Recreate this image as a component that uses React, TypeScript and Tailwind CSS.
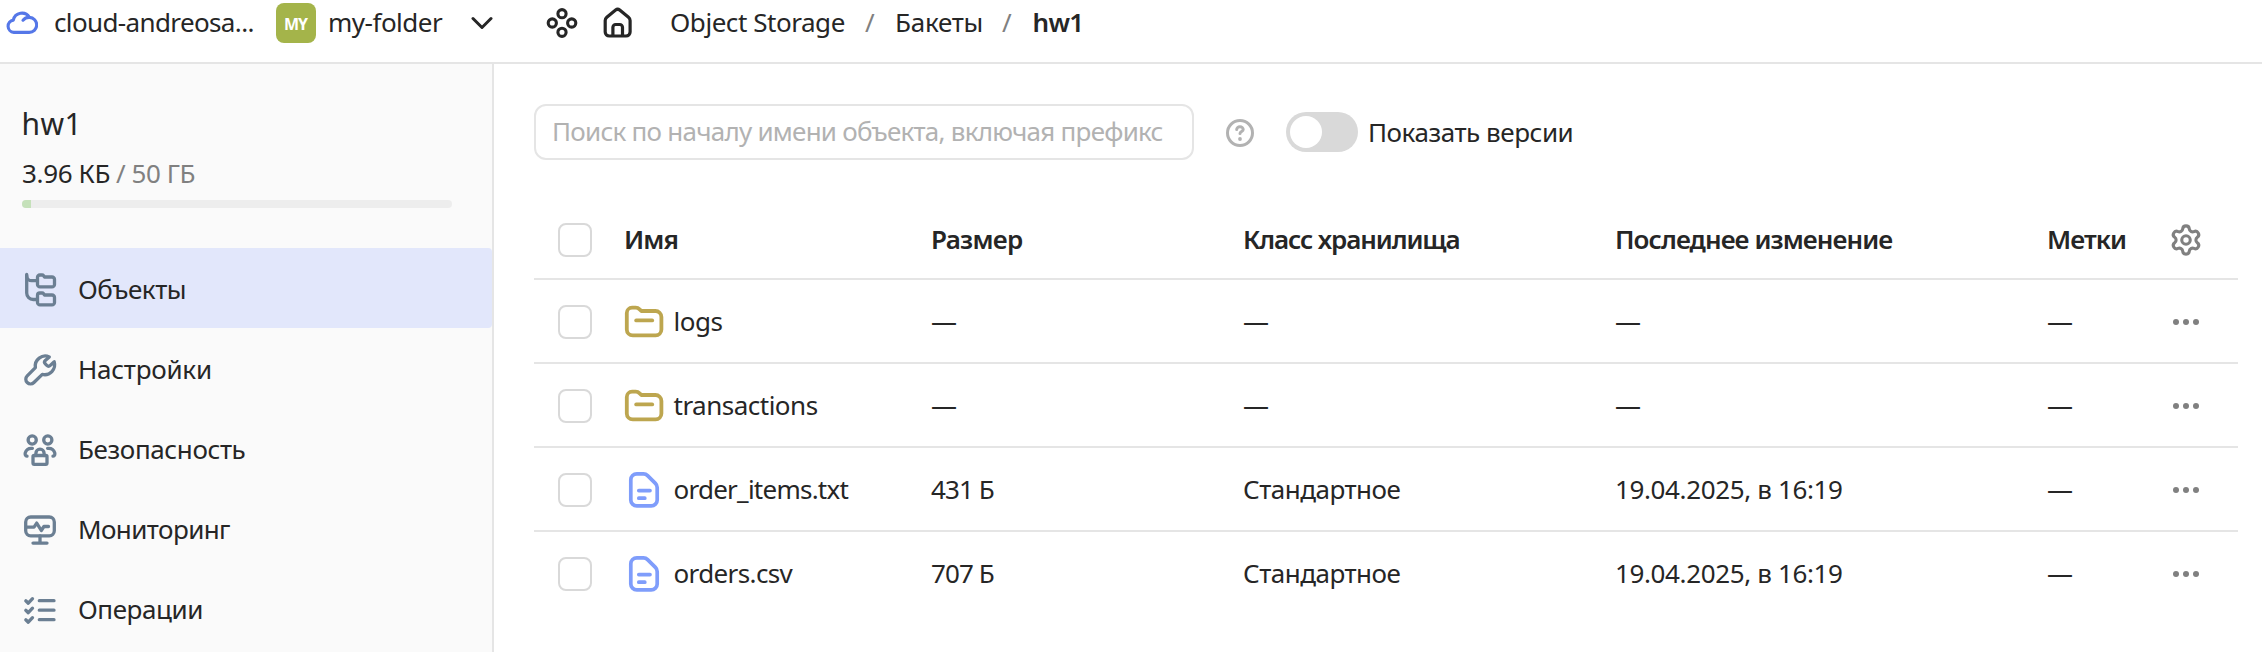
import React from 'react';
import { Settings } from 'lucide-react';

const stroke = {
  fill: 'none',
  stroke: 'currentColor',
  strokeLinecap: 'round' as const,
  strokeLinejoin: 'round' as const,
};

function CloudIcon() {
  return (
    <svg width="32" height="24" viewBox="0 0 32 24" {...stroke} strokeWidth="3.1" className="shrink-0 text-[#5577e8]">
      <path d="M7.8 22.4A6.2 6.2 0 0 1 7.3 10.1 8.8 8.8 0 0 1 23.4 7.4 7.5 7.5 0 0 1 23 22.4Z" />
      <path d="M17 10.2a8 8 0 0 1 6.4-2.8" />
    </svg>
  );
}

function ServicesIcon() {
  return (
    <svg width="32" height="32" viewBox="0 0 32 32" {...stroke} strokeWidth="3.1">
      <circle cx="16" cy="6.7" r="4.1" />
      <circle cx="6.3" cy="16" r="4.1" />
      <circle cx="25.7" cy="16" r="4.1" />
      <circle cx="16" cy="25.3" r="4.1" />
    </svg>
  );
}

function HomeIcon() {
  return (
    <svg width="32" height="32" viewBox="0 0 32 32" {...stroke} strokeWidth="3.2">
      <path d="M3.2 13.6a4.5 4.5 0 0 1 1.6-3.4l8.8-7.1a3.2 3.2 0 0 1 4.1 0l8.8 7.1a4.5 4.5 0 0 1 1.6 3.4V25a4 4 0 0 1-4 4H7.2a4 4 0 0 1-4-4Z" />
      <path d="M10.9 28.5v-8.2a2.8 2.8 0 0 1 2.8-2.8h4a2.8 2.8 0 0 1 2.8 2.8v8.2" />
    </svg>
  );
}

function TreeIcon() {
  return (
    <>
      <path d="M4.7 2.5V21a6.5 6.5 0 0 0 6.5 6.5H15" />
      <path d="M4.7 3.7a5 5 0 0 0 5 5H15" />
      <path d="M15.5 5.3a2.3 2.3 0 0 1 2.3-2.3h2.2a2 2 0 0 1 1.6.8l.9 1.2h7.5a2.5 2.5 0 0 1 2.5 2.5v4.9a2.5 2.5 0 0 1-2.5 2.5H18a2.5 2.5 0 0 1-2.5-2.5Z" />
      <path d="M15.5 23.3a2.3 2.3 0 0 1 2.3-2.3h2.2a2 2 0 0 1 1.6.8l.9 1.2h7.5a2.5 2.5 0 0 1 2.5 2.5v4.9a2.5 2.5 0 0 1-2.5 2.5H18a2.5 2.5 0 0 1-2.5-2.5Z" />
    </>
  );
}

function WrenchIcon() {
  return (
    <path d="M27.3 4.9A10 10 0 0 0 13.4 15.6L5.2 23.8a4.7 4.7 0 0 0 6.7 6.7L20.3 22.4A10 10 0 0 0 32.2 9.8L28.3 13.4a2.5 2.5 0 0 1-3.5 0l-1.5-1.5a2.5 2.5 0 0 1 0-3.5Z" />
  );
}

function SecurityIcon() {
  return (
    <>
      <circle cx="10.2" cy="8" r="4.1" />
      <circle cx="25.8" cy="8" r="4.1" />
      <path d="M10.4 16.3H9.5a6.3 6.3 0 0 0-6.2 4.5c-.5 1.8.1 3.2 1.7 3.4" />
      <path d="M25.6 16.3h.9a6.3 6.3 0 0 1 6.2 4.5c.5 1.8-.1 3.2-1.7 3.4" />
      <rect x="11" y="23.5" width="14" height="8.8" rx="1.2" />
      <path d="M13.9 23.5v-2.2a4.1 4.1 0 0 1 8.2 0v2.2" />
    </>
  );
}

function MonitorIcon() {
  return (
    <>
      <rect x="3.7" y="5" width="28.6" height="18.8" rx="5" />
      <path d="M18 24v6.5M11 31.1h14" />
      <path d="M5 15.1h7l2.7-4 4.6 7.4 2.6-4h4.6" />
    </>
  );
}

function ChecklistIcon() {
  return (
    <>
      <path d="M17.3 8.7H32M17.3 18.2H32M17.3 27.7H32" />
      <path d="M3.8 8.8l2.5 2.4 4.2-4.5M3.8 18.3l2.5 2.4 4.2-4.5M3.8 27.8l2.5 2.4 4.2-4.5" />
    </>
  );
}

function FolderIcon() {
  return (
    <svg width="42" height="38" viewBox="0 0 42 38" {...stroke} strokeWidth="3.8" className="text-[#bda64f]">
      <path d="M3.8 10a5.3 5.3 0 0 1 5.3-5.3h3.5a5.5 5.5 0 0 1 4 1.7l1.8 1.6h14a6 6 0 0 1 6 6v12.6a5.8 5.8 0 0 1-5.8 5.8H9.8a6 6 0 0 1-6-6Z" />
      <path d="M13.2 17.4h16" />
    </svg>
  );
}

function FileIcon() {
  return (
    <svg width="42" height="38" viewBox="0 0 42 38" {...stroke} strokeWidth="3.7" className="text-[#7f9dfb]">
      <path d="M7.8 8.8a6 6 0 0 1 6-6h6.6a6 6 0 0 1 4.2 1.8l7.8 7.8a6 6 0 0 1 1.8 4.2v12.3a6 6 0 0 1-6 6H13.8a6 6 0 0 1-6-6Z" />
      <path d="M15.8 19.6h11.2M15.8 27.2h6" />
    </svg>
  );
}

function HelpIcon() {
  return (
    <svg width="28" height="28" viewBox="0 0 28 28" {...stroke} strokeWidth="3" className="shrink-0 text-[#b2b2b2]">
      <circle cx="14" cy="14" r="12.5" />
      <path d="M10.7 10.6a3.2 2.9 0 0 1 6.5 0c0 2-3.2 2-3.2 4" />
      <circle cx="14" cy="20" r="1.9" fill="currentColor" stroke="none" />
    </svg>
  );
}

function Checkbox() {
  return <span className="mt-0.5 ml-6 block size-[34px] rounded-lg border-2 border-[#d9d9d9] bg-white" />;
}

const nav = [
  { label: 'Объекты', icon: <TreeIcon />, text: 'tracking-[-0.45px]', active: true },
  { label: 'Настройки', icon: <WrenchIcon />, text: 'tracking-[-0.25px]' },
  { label: 'Безопасность', icon: <SecurityIcon />, text: 'tracking-[-0.38px]' },
  { label: 'Мониторинг', icon: <MonitorIcon />, text: 'tracking-[-0.58px]' },
  { label: 'Операции', icon: <ChecklistIcon />, text: 'tracking-[-0.42px]' },
];

const rows = [
  { name: 'logs', folder: true, text: 'tracking-[-0.48px]', size: '—', cls: '—', date: '—' },
  { name: 'transactions', folder: true, text: 'tracking-[-0.5px]', size: '—', cls: '—', date: '—' },
  { name: 'order_items.txt', folder: false, text: 'tracking-[-0.75px]', size: '431 Б', cls: 'Стандартное', date: '19.04.2025, в 16:19' },
  { name: 'orders.csv', folder: false, text: 'tracking-[-0.62px]', size: '707 Б', cls: 'Стандартное', date: '19.04.2025, в 16:19' },
];

const columns = 'grid grid-cols-[90px_307px_312px_372px_432px_1fr] items-center';

function Header() {
  return (
    <header className="flex h-16 shrink-0 items-start border-b-2 border-[#e5e5e5] whitespace-nowrap">
      <div className="flex h-[46px] w-[546px] shrink-0 items-center">
        <span className="-mt-0.5 ml-1.5 flex">
          <CloudIcon />
        </span>
        <span className="-mt-0.5 ml-4 w-[222px] tracking-[-0.63px]">cloud-andreosa...</span>
        <span className="flex size-10 items-center justify-center rounded-lg bg-[#a4b44a] pt-0.5 pr-px text-base leading-none font-bold tracking-[-1px] text-white">
          MY
        </span>
        <span className="-mt-0.5 ml-3 w-[143px] tracking-[-0.5px]">my-folder</span>
        <svg width="22" height="14" viewBox="0 0 22 14" {...stroke} strokeWidth="3">
          <path d="M2 2.5l9 9 9-9" />
        </svg>
      </div>
      <div className="flex h-[46px] items-center">
        <ServicesIcon />
        <span className="ml-6 flex">
          <HomeIcon />
        </span>
      </div>
      <nav className="flex h-11 items-center pl-9">
        <span className="w-[195px] tracking-[-0.45px]">Object Storage</span>
        <span className="w-[30px] text-[#808080]">/</span>
        <span className="w-[107px] tracking-[-0.27px]">Бакеты</span>
        <span className="w-[30.5px] text-[#808080]">/</span>
        <span className="font-semibold tracking-[-0.7px]">hw1</span>
      </nav>
    </header>
  );
}

function Sidebar() {
  return (
    <aside className="flex w-[494px] shrink-0 flex-col border-r-2 border-[#e5e5e5] bg-[#fafafa] pt-[39px]">
      <h1 className="pl-[21.5px] text-[30px] leading-[41px] tracking-[0.5px]">hw1</h1>
      <div className="mt-[11px] flex pl-[22px] whitespace-nowrap">
        <span className="w-[94px] tracking-[-0.35px]">3.96 КБ</span>
        <span className="w-[15.5px] text-[#808080]">/</span>
        <span className="tracking-[-0.43px] text-[#808080]">50 ГБ</span>
      </div>
      <div className="mt-[9px] ml-[22px] h-2 w-[430px] overflow-hidden rounded-full bg-[#ededed]">
        <div className="h-full w-[9px] bg-[#c5e1ba]" />
      </div>
      <ul className="mt-10">
        {nav.map((item) => (
          <li
            key={item.label}
            className={`flex h-20 items-center rounded-r pt-0.5 pl-[22px] ${item.active ? 'bg-[#e2e7fb]' : ''}`}
          >
            <svg width="36" height="36" viewBox="0 0 36 36" {...stroke} strokeWidth="3.3" className="mt-0.5 text-[#6b7f93]">
              {item.icon}
            </svg>
            <span className={`ml-5 ${item.text}`}>{item.label}</span>
          </li>
        ))}
      </ul>
    </aside>
  );
}

function Toolbar() {
  return (
    <div className="flex h-14 items-center whitespace-nowrap">
      <input
        className="h-14 w-[660px] rounded-xl border-2 border-[#e5e5e5] px-4 pb-0.5 tracking-[-0.75px] outline-none placeholder:text-[#b2b2b2]"
        placeholder="Поиск по началу имени объекта, включая префикс"
      />
      <span className="mt-0.5 ml-8">
        <HelpIcon />
      </span>
      <span className="ml-8 flex h-10 w-[72px] items-center rounded-full bg-[#d9d9d9] p-1">
        <span className="size-8 rounded-full bg-white" />
      </span>
      <span className="ml-2.5 tracking-[-0.45px]">Показать версии</span>
    </div>
  );
}

function ObjectsTable() {
  return (
    <div className="mt-10 whitespace-nowrap">
      <div className={`${columns} h-20 border-b-2 border-[#e5e5e5] font-semibold`}>
        <Checkbox />
        <span className="tracking-[-0.95px]">Имя</span>
        <span className="tracking-[-0.71px]">Размер</span>
        <span className="tracking-[-1.1px]">Класс хранилища</span>
        <span className="tracking-[-0.92px]">Последнее изменение</span>
        <span className="flex items-center">
          <span className="w-[122px] tracking-[-0.9px]">Метки</span>
          <Settings size={34} strokeWidth={2.2} className="mt-0.5 text-[#808080]" />
        </span>
      </div>
      {rows.map((row) => (
        <div key={row.name} className={`${columns} h-[84px] border-b-2 border-[#e5e5e5] last:border-transparent`}>
          <Checkbox />
          <span className="-ml-px flex items-center">
            <span className="mt-0.5 flex">{row.folder ? <FolderIcon /> : <FileIcon />}</span>
            <span className={`ml-[8.5px] ${row.text}`}>{row.name}</span>
          </span>
          <span className="tracking-[-0.9px]">{row.size}</span>
          <span className="tracking-[-0.5px]">{row.cls}</span>
          <span className="tracking-[-0.37px]">{row.date}</span>
          <span className="flex items-center">
            <span className="w-[126px]">—</span>
            <span className="mt-0.5 flex gap-1 text-[#808080]">
              <span className="size-1.5 rounded-full bg-current" />
              <span className="size-1.5 rounded-full bg-current" />
              <span className="size-1.5 rounded-full bg-current" />
            </span>
          </span>
        </div>
      ))}
    </div>
  );
}

export default function App() {
  return (
    <div className="flex h-[652px] w-[2262px] flex-col overflow-hidden bg-white font-['Noto_Sans',sans-serif] text-[26px] leading-9 text-[#262626]">
      <Header />
      <div className="flex min-h-0 flex-1">
        <Sidebar />
        <main className="w-[1744px] pt-10 pl-10">
          <Toolbar />
          <ObjectsTable />
        </main>
      </div>
    </div>
  );
}
